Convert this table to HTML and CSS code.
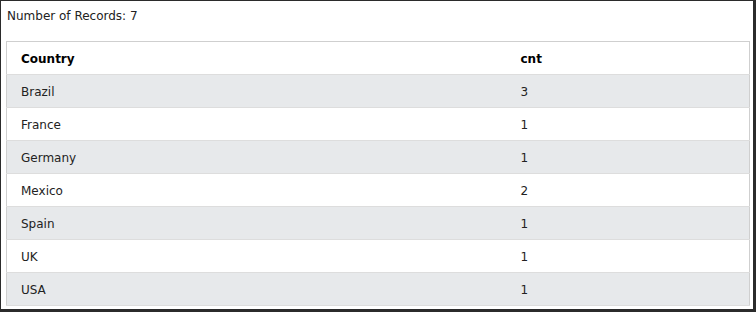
FILE: index.html
```html
<!DOCTYPE html>
<html>
<head>
<meta charset="utf-8">
<link rel="stylesheet" href="styles.css">
</head>
<body>
<div class="frame">
  <div class="count">Number of Records: 7</div>
  <table class="data">
    <colgroup><col class="c1"><col class="c2"></colgroup>
    <thead>
      <tr><th>Country</th><th>cnt</th></tr>
    </thead>
    <tbody>
      <tr><td>Brazil</td><td>3</td></tr>
      <tr><td>France</td><td>1</td></tr>
      <tr><td>Germany</td><td>1</td></tr>
      <tr><td>Mexico</td><td>2</td></tr>
      <tr><td>Spain</td><td>1</td></tr>
      <tr><td>UK</td><td>1</td></tr>
      <tr><td>USA</td><td>1</td></tr>
    </tbody>
  </table>
</div>
</body>
</html>
```
FILE: styles.css
```css
html, body {
  margin: 0;
  padding: 0;
  background: #fff;
}
.frame {
  box-sizing: border-box;
  width: 756px;
  height: 312px;
  border-style: solid;
  border-color: #2b2b2b;
  border-width: 1px 3px 3px 1px;
  font-family: "DejaVu Sans", Verdana, sans-serif;
  font-size: 12px;
  color: #222;
}
.count {
  padding: 7px 0 0 6px;
  line-height: 16px;
  height: 17px;
}
.data {
  margin: 16px 0 0 5px;
  width: 744px;
  border-collapse: collapse;
  border: 1px solid #cfcfcf;
  table-layout: fixed;
}
.c1 { width: 500px; }
.data th, .data td {
  text-align: left;
  padding: 1px 0 0 14px;
  height: 31px;
  border-bottom: 1px solid #dddddd;
  line-height: 16px;
}
.data th {
  font-weight: bold;
  color: #000;
}
.data tbody tr:nth-child(odd) {
  background: #e7e9eb;
}
```
